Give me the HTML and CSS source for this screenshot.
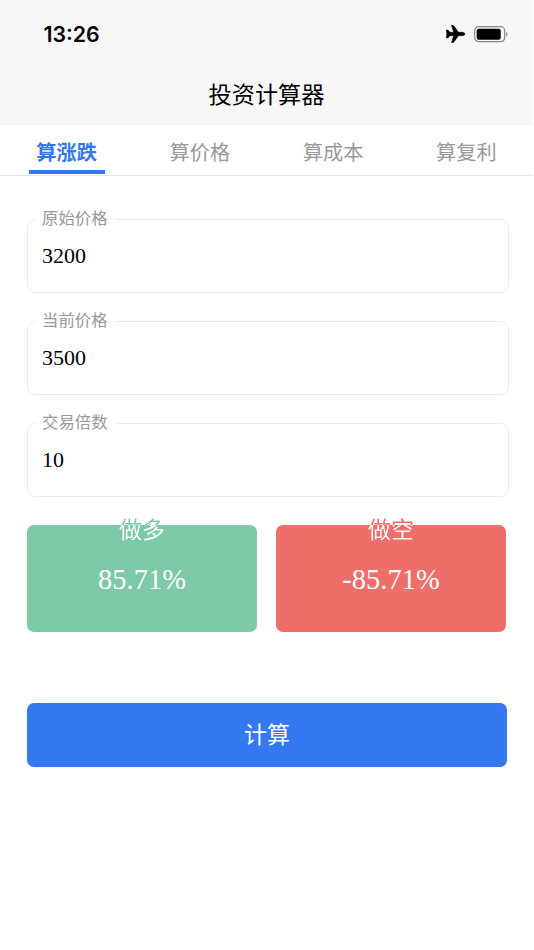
FILE: index.html
```
<!DOCTYPE html>
<html lang="zh-CN">
<head>
    <meta charset="utf-8">
    <title>投资计算器</title>
    <link rel="stylesheet" href="styles.css">
</head>
<body>

<div class="header">
    <div class="status">
        <span class="time">13:26</span>
        <span class="icons">
            <svg class="plane" width="21" height="18" viewBox="0 0 20 18">
                <path d="M19.400 9c0-1-1.200-1.700-2.600-1.700h-3.900L8.200.8C8 .5 7.700.3 7.300.3H6l2.200 7H4.300L2.500 5.100H.9L1.400 9l-.5 3.900h1.600l1.800-2.200h3.900L6 17.700h1.300c.4 0 .7-.2.9-.5l4.700-6.500h3.900c1.400 0 2.600-.7 2.600-1.700z" stroke="#000" stroke-width=".6"/>
            </svg>
            <svg class="battery" width="34" height="17" viewBox="0 0 34 17">
                <rect x=".7" y=".7" width="30" height="15" rx="4" fill="none" stroke="#888" stroke-width="1.200"/>
                <rect x="2.700" y="2.700" width="24" height="11" rx="2"/>
                <path d="M32.200 6v4.400c1.700-.6 1.700-3.800 0-4.400z" fill="#888"/>
            </svg>
        </span>
    </div>
    <h1>投资计算器</h1>
</div>

<div class="tabs">
    <div class="tab"><span class="active">算涨跌</span></div>
    <div class="tab"><span>算价格</span></div>
    <div class="tab"><span>算成本</span></div>
    <div class="tab"><span>算复利</span></div>
</div>

<div class="content">
    <fieldset>
        <legend>原始价格</legend>
        <div class="value">3200</div>
    </fieldset>
    <fieldset>
        <legend>当前价格</legend>
        <div class="value">3500</div>
    </fieldset>
    <fieldset>
        <legend>交易倍数</legend>
        <div class="value">10</div>
    </fieldset>

    <div class="results">
        <div class="card long">
            <div class="name">做多</div>
            <div class="rate">85.71%</div>
        </div>
        <div class="card short">
            <div class="name">做空</div>
            <div class="rate">-85.71%</div>
        </div>
    </div>

    <div class="submit">计算</div>
</div>

</body>
</html>
```
FILE: styles.css
```
* {
    box-sizing: border-box;
}
body {
    margin: 0;
    width: 533px;
    height: 950px;
    background: #fff;
    font-family: "Liberation Serif", "Noto Sans CJK SC", serif;
    color: #000;
}

.header {
    width: 534px;
    height: 125px;
    padding-right: 1px;
    background: #f7f7f7;
}
.status {
    display: flex;
    justify-content: space-between;
    height: 64px;
    padding: 20px 25px 0 43.500px;
}
.time {
    font: 600 21.300px/28px Inter, sans-serif;
}
.icons {
    display: flex;
    align-items: center;
    gap: 8px;
    height: 28px;
}
h1 {
    margin: 0;
    font-size: 23.200px;
    font-weight: normal;
    line-height: 62px;
    text-align: center;
}

.tabs {
    display: flex;
    width: 534px;
    height: 51px;
    padding-right: 1px;
    border-bottom: 1px solid #e8e8e8;
}
.tab {
    flex: 1;
    text-align: center;
}
.tab span {
    display: inline-block;
    width: 76px;
    height: 49px;
    font-size: 20.200px;
    line-height: 56px;
    color: #999;
}
.tab .active {
    border-bottom: 4px solid #3478f0;
    font-weight: bold;
    color: #3478f0;
}

.content {
    padding: 31px 27px 0;
}
fieldset {
    width: 482px;
    height: 85.500px;
    margin: 0 0 16.500px;
    padding: 0 14px;
    border: 1px solid #ececec;
    border-radius: 8px;
}
legend {
    margin-left: -7px;
    padding: 0 7px;
    font-size: 16.400px;
    line-height: 24px;
    color: #999;
}
.value {
    font-size: 22px;
    line-height: 49px;
}

.results {
    display: flex;
    gap: 19px;
    margin-top: 28.500px;
}
.card {
    width: 230px;
    height: 107px;
    border-radius: 7px;
    text-align: center;
    color: #fff;
}
.long {
    background: #7dc9a8;
}
.short {
    background: #ee6e69;
}
/* the name sticks out of the card, its top part takes the card colour */
.name {
    height: 32px;
    margin-top: -10px;
    font-size: 23px;
    line-height: 32px;
    color: transparent;
    -webkit-background-clip: text;
    background-clip: text;
}
.long .name {
    background-image: linear-gradient(#7dc9a8 10px, #fff 10px);
}
.short .name {
    background-image: linear-gradient(#ee6e69 10px, #fff 10px);
}
.rate {
    font-size: 28.500px;
    line-height: 66px;
}

.submit {
    width: 480px;
    height: 64px;
    margin-top: 70.500px;
    border-radius: 7px;
    background: #3478f2;
    font-size: 23px;
    line-height: 65px;
    text-align: center;
    color: #fff;
}
```
